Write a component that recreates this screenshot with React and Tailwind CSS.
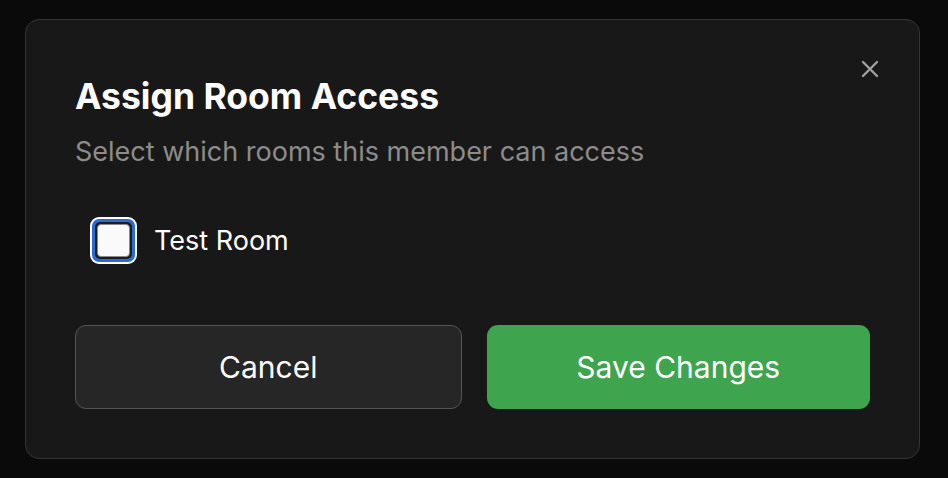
import React from 'react';

/* Assign Room Access dialog: title, subtitle, one room checkbox, footer buttons. */

export default function App() {
  return (
    <div className="w-[948px] h-[478px] bg-[#0a0a0a] pt-[19px] pl-[25px]" style={{ fontFamily: 'Inter, "Liberation Sans", sans-serif' }}>
      <div className="relative w-[895px] h-[440px] rounded-[14px] border border-[#343434] bg-[#181818] px-[49px] pt-[56px]">
        <button className="absolute right-[37px] top-[37px] w-[24px] h-[24px] flex items-center justify-center text-[#a0a0a0]">
          <svg width="20" height="20" viewBox="0 0 20 20" fill="none" stroke="currentColor" strokeWidth="2.4" strokeLinecap="round">
            <path d="M3 3 L17 17 M17 3 L3 17" />
          </svg>
        </button>

        <h2 className="text-[35.5px] leading-[42px] font-bold text-white">Assign Room Access</h2>
        <p className="mt-[17px] text-[27px] leading-[34px] text-[#8c8c8c]">Select which rooms this member can access</p>

        <label className="mt-[48px] ml-[15px] flex items-center gap-[17px]">
          <span className="w-[47px] h-[47px] rounded-[9px] bg-white p-[2px] flex">
            <span className="flex-1 rounded-[7px] bg-[#2c6ad8] p-[3px] flex">
              <span className="flex-1 rounded-[5px] bg-[#1e1e1e] p-[2px] flex">
                <span className="flex-1 rounded-[4px] bg-[#fafafa] border border-[#8a8a8a]" />
              </span>
            </span>
          </span>
          <span className="text-[27px] leading-[34px] text-white">Test Room</span>
        </label>

        <div className="mt-[61px] flex gap-[25px]">
          <button className="w-[387px] h-[84px] rounded-[11px] border border-[#555] bg-[#262626] text-[30px] text-white">Cancel</button>
          <button className="w-[384px] h-[84px] rounded-[11px] bg-[#3ea54e] text-[30px] text-white">Save Changes</button>
        </div>
      </div>
    </div>
  );
}
